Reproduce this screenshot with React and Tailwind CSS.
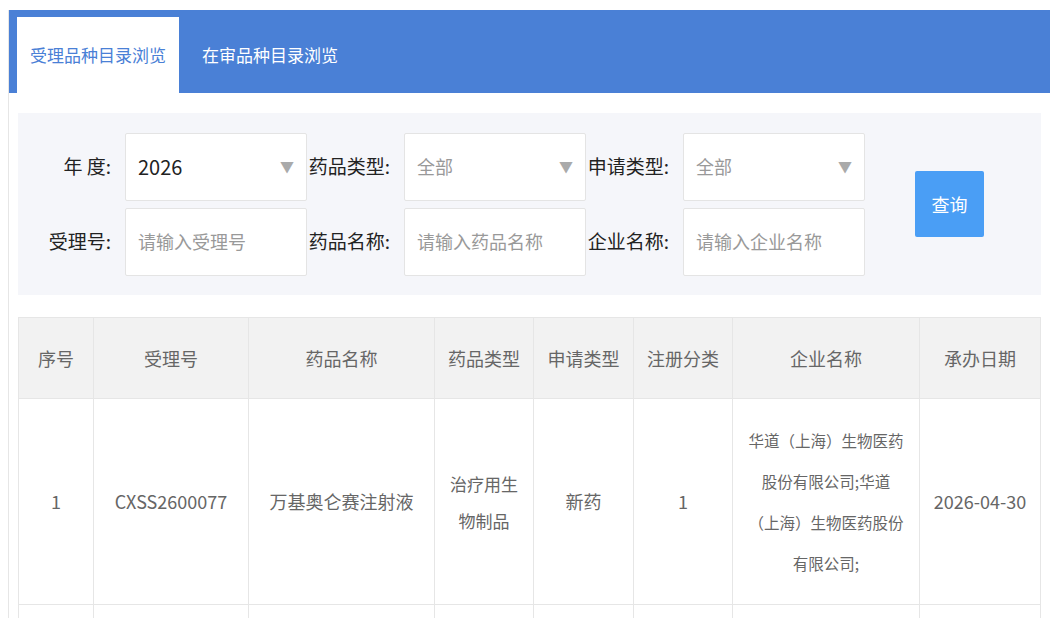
import React from "react";

const cols = ["w-[75px]", "w-[155px]", "w-[186px]", "w-[99px]", "w-[100px]", "w-[99px]", "w-[187px]", "flex-1"];
const heads = ["序号", "受理号", "药品名称", "药品类型", "申请类型", "注册分类", "企业名称", "承办日期"];
const row = ["1", "CXSS2600077", "万基奥仑赛注射液", "治疗用生物制品", "新药", "1", "华道（上海）生物医药股份有限公司;华道（上海）生物医药股份有限公司;", "2026-04-30"];

function Field({ label, value, placeholder, select, first }) {
  return (
    <div className="flex items-center">
      <div className={`${first ? "w-[107px]" : "w-[97px]"} text-right pr-[14px] text-[19px] text-[#222]`}>{label}</div>
      <div className="w-[182px] h-[68px] bg-white border border-[#e4e4e4] rounded-[2px] flex items-center px-3 justify-between">
        {value ? (
          <span className="text-[20px] text-[#222]">{value}</span>
        ) : (
          <span className="text-[18px] text-[#999]">{placeholder}</span>
        )}
        {select && <span className="text-[#aaa] text-[14px]">▼</span>}
      </div>
    </div>
  );
}

export default function App() {
  return (
    <div className="w-[1064px] h-[618px] bg-white overflow-hidden pt-[10px] pl-[8px] pr-[14px]" style={{ fontFamily: '"Noto Sans CJK SC", "Liberation Sans", sans-serif' }}>
      <div className="border-l border-[#e6e6e6] h-full">
        {/* Tabs */}
        <div className="bg-[#4a80d6] h-[83px] flex items-end pl-[8px]">
          <div className="w-[162px] h-[76px] bg-white flex items-center justify-center text-[17px] text-[#4a80d6]">受理品种目录浏览</div>
          <div className="w-[182px] h-[76px] flex items-center justify-center text-[17px] text-white">在审品种目录浏览</div>
        </div>

        <div className="px-[9px] pt-[20px]">
          {/* Filters */}
          <div className="bg-[#f5f6fa] h-[182px] flex items-center">
            <div className="flex flex-col gap-[7px]">
              <div className="flex">
                <Field first label="年  度:" value="2026" select />
                <Field label="药品类型:" placeholder="全部" select />
                <Field label="申请类型:" placeholder="全部" select />
              </div>
              <div className="flex">
                <Field first label="受理号:" placeholder="请输入受理号" />
                <Field label="药品名称:" placeholder="请输入药品名称" />
                <Field label="企业名称:" placeholder="请输入企业名称" />
              </div>
            </div>
            <button className="ml-[50px] w-[69px] h-[66px] bg-[#4a9ef5] rounded-[2px] text-white text-[18px]">查询</button>
          </div>

          {/* Table */}
          <div className="mt-[22px] border border-[#e6e6e6]">
            <div className="flex h-[81px] bg-[#f2f2f2] border-b border-[#e6e6e6]">
              {heads.map((h, i) => (
                <div key={h} className={`${cols[i]} flex items-center justify-center text-[18px] text-[#666] ${i < 7 ? "border-r border-[#e6e6e6]" : ""}`}>{h}</div>
              ))}
            </div>
            <div className="flex h-[206px] border-b border-[#e6e6e6]">
              {row.map((c, i) => (
                <div key={i} className={`${cols[i]} flex items-center justify-center text-center text-[#666] ${i === 3 ? "px-[12px] text-[17px] leading-[37px]" : i === 6 ? "px-[14px] text-[15.5px] leading-[41px]" : "px-2 text-[18px]"} ${i < 7 ? "border-r border-[#e6e6e6]" : ""}`}>{c}</div>
              ))}
            </div>
            <div className="flex h-[40px]">
              {cols.map((c, i) => (
                <div key={i} className={`${c} ${i < 7 ? "border-r border-[#e6e6e6]" : ""}`} />
              ))}
            </div>
          </div>
        </div>
      </div>
    </div>
  );
}
